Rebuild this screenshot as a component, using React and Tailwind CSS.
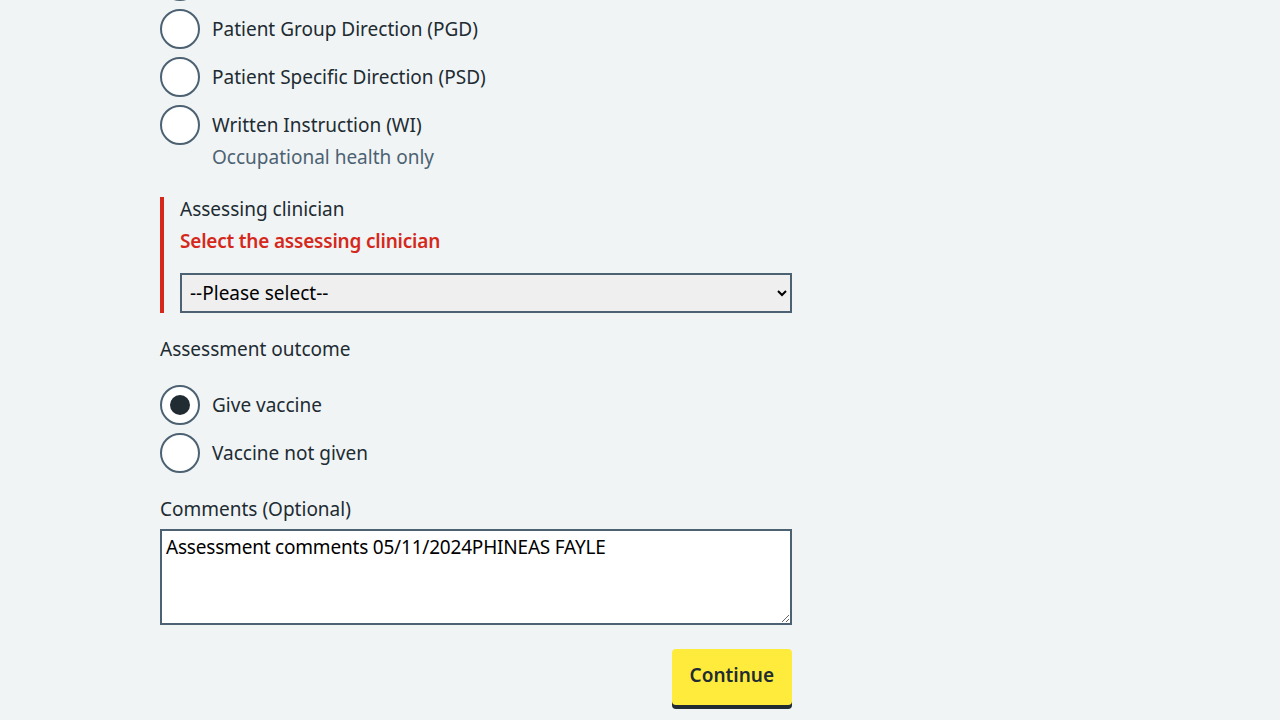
import React from "react";

const font = { fontFamily: '"Noto Sans", "Liberation Sans", sans-serif' };

function Radio({ label, checked, hint }) {
  return (
    <div className="flex flex-col">
      <div className="flex items-center h-[40px]">
        <div className="w-[40px] h-[40px] rounded-full border-2 border-[#4c6272] bg-white flex items-center justify-center shrink-0">
          {checked && <div className="w-[20px] h-[20px] rounded-full bg-[#212b32]" />}
        </div>
        {label && <span className="ml-[12px] text-[19px] leading-[24px] text-[#212b32]">{label}</span>}
      </div>
      {hint && (
        <div className="pl-[52px] mt-[0px] text-[19px] leading-[24px] text-[#4c6272]">{hint}</div>
      )}
    </div>
  );
}

export default function App() {
  return (
    <div className="h-[720px] overflow-hidden bg-[#f0f4f5]" style={font}>
      <div className="pl-[160px] w-[792px] -mt-[39px] flex flex-col">
        <div className="flex flex-col gap-[8px]">
          <Radio />
          <Radio label="Patient Group Direction (PGD)" />
          <Radio label="Patient Specific Direction (PSD)" />
          <Radio label="Written Instruction (WI)" hint="Occupational health only" />
        </div>

        <div className="mt-[28px] border-l-4 border-[#d5281b] pl-[16px] flex flex-col">
          <div className="text-[19px] leading-[24px] text-[#212b32]">Assessing clinician</div>
          <div className="mt-[8px] text-[19px] leading-[24px] font-semibold tracking-[-0.2px] text-[#d5281b]">Select the assessing clinician</div>
          <select
            className="mt-[20px] h-[40px] w-full border-2 border-[#4c6272] bg-[#efefef] text-black text-[19px] px-[4px]"
            style={font}
            defaultValue=""
          >
            <option value="">--Please select--</option>
          </select>
        </div>

        <div className="mt-[24px] text-[19px] leading-[24px] text-[#212b32]">Assessment outcome</div>
        <div className="mt-[24px] flex flex-col gap-[8px]">
          <Radio label="Give vaccine" checked />
          <Radio label="Vaccine not given" />
        </div>

        <div className="mt-[24px] text-[19px] leading-[24px] text-[#212b32]">Comments (Optional)</div>
        <textarea
          className="mt-[8px] h-[96px] w-full border-2 border-[#4c6272] bg-white text-black text-[19px] leading-[24px] px-[4px] py-[4px] tracking-[-0.2px]"
          style={font}
          defaultValue="Assessment comments 05/11/2024PHINEAS FAYLE"
        />

        <div className="mt-[24px] flex justify-end">
          <button className="h-[56px] px-[18px] pb-[3px] rounded-[4px] bg-[#ffeb3b] text-[#212b32] text-[19px] font-semibold shadow-[0_4px_0_#212b32]" style={font}>
            Continue
          </button>
        </div>
      </div>
    </div>
  );
}
